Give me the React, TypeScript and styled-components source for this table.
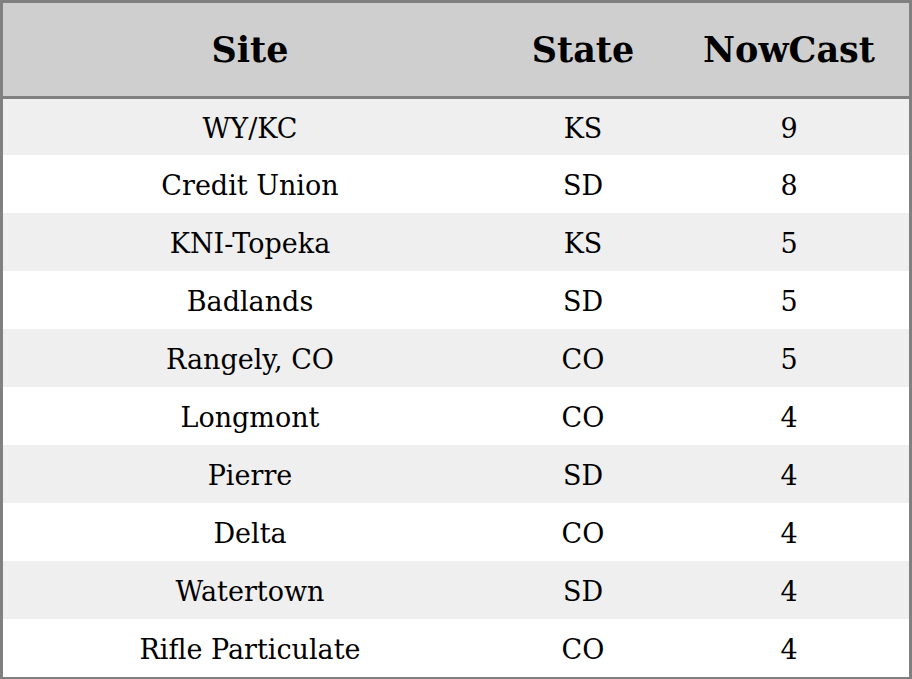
import React from "react";
import styled, { createGlobalStyle } from "styled-components";

const Global = createGlobalStyle`
  html, body { margin: 0; padding: 0; background: #ffffff; }
  body { font-family: "DejaVu Serif", serif; color: #000; }
`;

const Table = styled.table`
  width: 912px;
  border-collapse: separate;
  border-spacing: 0;
  border: 3px solid #808080;
  font-family: "DejaVu Serif", serif;
  table-layout: fixed;
`;

const HeadCell = styled.th<{ $w: number }>`
  width: ${(p) => p.$w}px;
  height: 93px;
  padding: 0;
  background: #cfcfcf;
  border-bottom: 3px solid #808080;
  font-size: 35px;
  font-weight: bold;
  line-height: 1;
  text-align: center;
  vertical-align: middle;
`;

const Row = styled.tr<{ $odd: boolean; $first: boolean }>`
  background: ${(p) => (p.$odd ? "#efefef" : "#ffffff")};
  height: ${(p) => (p.$first ? 56 : 58)}px;
`;

const Cell = styled.td`
  padding: 2px 0 0;
  font-size: 27px;
  line-height: 1;
  text-align: center;
  vertical-align: middle;
`;

const rows: [string, string, number][] = [
  ["WY/KC", "KS", 9],
  ["Credit Union", "SD", 8],
  ["KNI-Topeka", "KS", 5],
  ["Badlands", "SD", 5],
  ["Rangely, CO", "CO", 5],
  ["Longmont", "CO", 4],
  ["Pierre", "SD", 4],
  ["Delta", "CO", 4],
  ["Watertown", "SD", 4],
  ["Rifle Particulate", "CO", 4],
];

export default function App() {
  return (
    <>
      <Global />
      <Table>
        <thead>
          <tr>
            <HeadCell $w={494}>Site</HeadCell>
            <HeadCell $w={172}>State</HeadCell>
            <HeadCell $w={240}>NowCast</HeadCell>
          </tr>
        </thead>
        <tbody>
          {rows.map(([site, st, n], i) => (
            <Row key={site} $odd={i % 2 === 0} $first={i === 0}>
              <Cell>{site}</Cell>
              <Cell>{st}</Cell>
              <Cell>{n}</Cell>
            </Row>
          ))}
        </tbody>
      </Table>
    </>
  );
}
